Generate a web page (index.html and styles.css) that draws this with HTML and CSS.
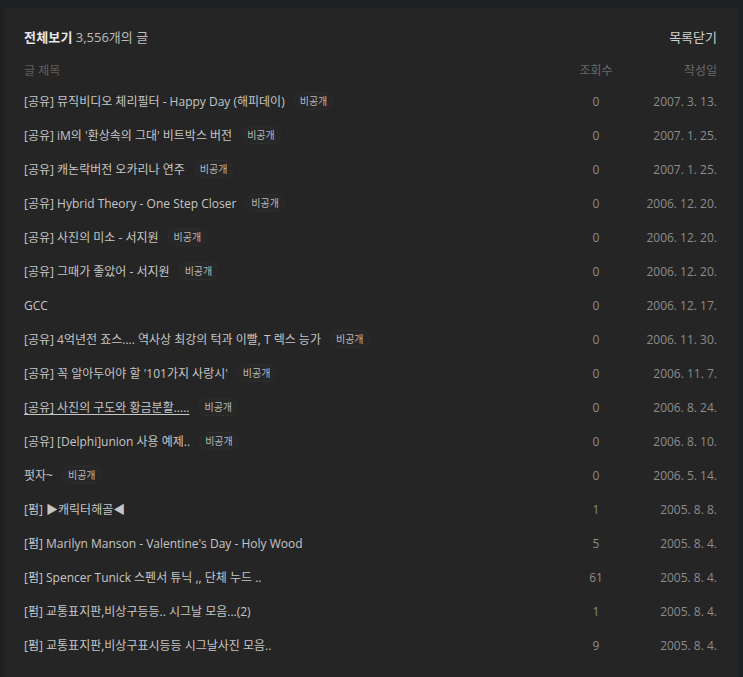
FILE: index.html
```html
<!DOCTYPE html>
<html lang="ko">
<head>
<meta charset="utf-8">
<link rel="stylesheet" href="styles.css">
</head>
<body>
<div class="frame">
  <div class="panel">
    <div class="top">
      <div class="title"><strong>전체보기</strong> <span class="count">3,556개의 글</span></div>
      <a class="close">목록닫기</a>
    </div>
    <div class="row head">
      <div class="c-title">글 제목</div>
      <div class="c-views">조회수</div>
      <div class="c-date">작성일</div>
    </div>
    <div class="row"><div class="c-title"><span class="t">[공유] 뮤직비디오 체리필터 - Happy Day (해피데이)</span><span class="badge">비공개</span></div><div class="c-views">0</div><div class="c-date">2007. 3. 13.</div></div>
    <div class="row"><div class="c-title"><span class="t">[공유] iM의 '환상속의 그대' 비트박스 버전</span><span class="badge">비공개</span></div><div class="c-views">0</div><div class="c-date">2007. 1. 25.</div></div>
    <div class="row"><div class="c-title"><span class="t">[공유] 캐논락버전 오카리나 연주</span><span class="badge">비공개</span></div><div class="c-views">0</div><div class="c-date">2007. 1. 25.</div></div>
    <div class="row"><div class="c-title"><span class="t">[공유] Hybrid Theory - One Step Closer</span><span class="badge">비공개</span></div><div class="c-views">0</div><div class="c-date">2006. 12. 20.</div></div>
    <div class="row"><div class="c-title"><span class="t">[공유] 사진의 미소 - 서지원</span><span class="badge">비공개</span></div><div class="c-views">0</div><div class="c-date">2006. 12. 20.</div></div>
    <div class="row"><div class="c-title"><span class="t">[공유] 그때가 좋았어 - 서지원</span><span class="badge">비공개</span></div><div class="c-views">0</div><div class="c-date">2006. 12. 20.</div></div>
    <div class="row"><div class="c-title"><span class="t">GCC</span></div><div class="c-views">0</div><div class="c-date">2006. 12. 17.</div></div>
    <div class="row"><div class="c-title"><span class="t">[공유] 4억년전 죠스.... 역사상 최강의 턱과 이빨, T 렉스 능가</span><span class="badge">비공개</span></div><div class="c-views">0</div><div class="c-date">2006. 11. 30.</div></div>
    <div class="row"><div class="c-title"><span class="t">[공유] 꼭 알아두어야 할 '101가지 사랑시'</span><span class="badge">비공개</span></div><div class="c-views">0</div><div class="c-date">2006. 11. 7.</div></div>
    <div class="row"><div class="c-title"><span class="t ul">[공유] 사진의 구도와 황금분활.....</span><span class="badge">비공개</span></div><div class="c-views">0</div><div class="c-date">2006. 8. 24.</div></div>
    <div class="row"><div class="c-title"><span class="t">[공유] [Delphi]union 사용 예제..</span><span class="badge">비공개</span></div><div class="c-views">0</div><div class="c-date">2006. 8. 10.</div></div>
    <div class="row"><div class="c-title"><span class="t">펏자~</span><span class="badge">비공개</span></div><div class="c-views">0</div><div class="c-date">2006. 5. 14.</div></div>
    <div class="row"><div class="c-title"><span class="t">[펌] ▶캐릭터해골◀</span></div><div class="c-views">1</div><div class="c-date">2005. 8. 8.</div></div>
    <div class="row"><div class="c-title"><span class="t">[펌] Marilyn Manson - Valentine's Day - Holy Wood</span></div><div class="c-views">5</div><div class="c-date">2005. 8. 4.</div></div>
    <div class="row"><div class="c-title"><span class="t">[펌] Spencer Tunick 스펜서 튜닉 ,, 단체 누드 ..</span></div><div class="c-views">61</div><div class="c-date">2005. 8. 4.</div></div>
    <div class="row"><div class="c-title"><span class="t">[펌] 교통표지판,비상구등등.. 시그날 모음...(2)</span></div><div class="c-views">1</div><div class="c-date">2005. 8. 4.</div></div>
    <div class="row"><div class="c-title"><span class="t">[펌] 교통표지판,비상구표시등등 시그날사진 모음..</span></div><div class="c-views">9</div><div class="c-date">2005. 8. 4.</div></div>
  </div>
</div>
</body>
</html>
```

FILE: styles.css
```css
html, body {
  margin: 0;
  padding: 0;
  background: #1f2021;
  height: 100%;
}
body {
  font-family: "Open Sans", "Noto Sans CJK KR", sans-serif;
  font-size: 12px;
  color: #c4c4c4;
}
.frame {
  padding: 8px 5px 0 4px;
  height: 100%;
  box-sizing: border-box;
}
.panel {
  background: #252525;
  height: 100%;
  padding: 15px 21px 0 20px;
  box-sizing: border-box;
  overflow: hidden;
}
.top {
  display: flex;
  justify-content: space-between;
  align-items: center;
  height: 26px;
}
.title strong {
  font-size: 13px;
  font-weight: 700;
  color: #e6e6e6;
  letter-spacing: 0.2px;
}
.title .count {
  font-size: 13px;
  color: #bdbdbd;
}
.close {
  font-size: 13px;
  color: #d0d0d0;
}
.row {
  display: flex;
  align-items: center;
  height: 34px;
}
.row.head {
  height: 29px;
  padding-top: 6px;
  color: #606060;
}
.c-title {
  flex: 1;
  display: flex;
  align-items: center;
  min-width: 0;
  white-space: nowrap;
}
.c-views {
  width: 48px;
  text-align: center;
  color: #8c8c8c;
}
.row.head .c-views, .row.head .c-date { color: #6a6a6a; }
.c-date {
  width: 97px;
  text-align: right;
  color: #8c8c8c;
}
.t {
  color: #c6c6c6;
}
.t.ul {
  text-decoration: underline;
  text-underline-offset: 2px;
}
.badge {
  margin-left: 9px;
  font-size: 10px;
  line-height: 16px;
  padding: 0 5px;
  border: 1px solid #2d2d2d;
  background: #272727;
  border-radius: 9px;
  color: #bbbbbb;
}
```
